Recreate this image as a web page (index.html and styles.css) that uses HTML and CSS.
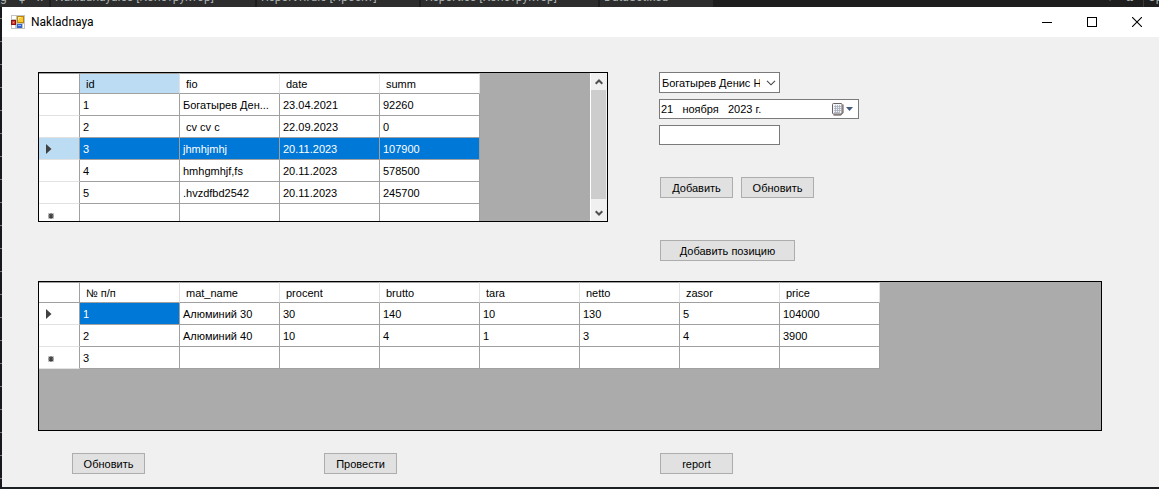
FILE: index.html
```html
<!DOCTYPE html>
<html lang="ru">
<head>
<meta charset="utf-8">
<title>Nakladnaya</title>
<link rel="stylesheet" href="styles.css">
</head>
<body>
<div class="ide-tabs">
  <span class="ide-icons"><span>g</span><span>џ</span><span>x</span></span>
  <span class="ide-tab tab-wide">Nakladnaya.cs [Конструктор]</span>
  <span class="ide-tab tab-mid">Report1.rdlc [Проект]</span>
  <span class="ide-tab tab-report">Report.cs [Конструктор]</span>
  <span class="ide-tab tab-short">DataSet.xsd</span>
  <span class="ide-tools"><span>▾</span><span>✿</span></span>
  <span class="ide-side">Ср</span>
</div>
<div class="desktop">
<div class="window">
  <header class="titlebar">
    <svg class="app-icon" width="14" height="14" viewBox="0 0 14 14" shape-rendering="crispEdges">
      <rect width="14" height="14" fill="#c3c3c3"/>
      <path d="M1 1h4v3H1zM1 10h3v3H1zM12 9h1v4h-1z" fill="#fff"/>
      <rect y="5" width="5" height="5" fill="#8c1410"/><rect x="1" y="6" width="3" height="3" fill="#d8402f"/><rect x="2" y="7" width="1" height="1" fill="#f3a090"/>
      <rect x="6" y="1" width="7" height="7" fill="#b8860b"/><rect x="7" y="2" width="5" height="5" fill="#fbc82e"/><path d="M7 2h3v1H8v2H7z" fill="#ffe99a"/>
      <rect x="6" y="9" width="5" height="4" fill="#3464cc"/><path d="M7 10h3v1H7z" fill="#8cb8ff"/>
    </svg>
    <h1 class="title">Nakladnaya</h1>
    <div class="window-buttons">
      <button class="window-button" type="button" aria-label="Свернуть"><svg width="10" height="10" viewBox="0 0 10 10"><path d="M0 5.5h10" stroke="#000"/></svg></button>
      <button class="window-button" type="button" aria-label="Развернуть"><svg width="10" height="10" viewBox="0 0 10 10"><rect x=".5" y=".5" width="9" height="9" fill="none" stroke="#000"/></svg></button>
      <button class="window-button" type="button" aria-label="Закрыть"><svg width="10" height="10" viewBox="0 0 10 10"><path d="M0 0l10 10M10 0L0 10" stroke="#000" stroke-width="1.1"/></svg></button>
    </div>
  </header>
  <main class="form">
    <section class="columns">
      <div class="data-grid">
        <div class="grid-view">
        <table class="table">
          <thead>
            <tr><th class="mark"></th><th class="current">id</th><th>fio</th><th>date</th><th>summ</th></tr>
          </thead>
          <tbody>
            <tr><th class="mark"></th><td>1</td><td>Богатырев Ден...</td><td>23.04.2021</td><td>92260</td></tr>
            <tr><th class="mark"></th><td>2</td><td>&nbsp;cv cv c</td><td>22.09.2023</td><td>0</td></tr>
            <tr class="selected"><th class="mark"><svg class="arrow" width="6" height="10" viewBox="0 0 6 10"><path d="M0 0l5.5 5L0 10z" fill="#404040"/></svg></th><td>3</td><td>jhmhjmhj</td><td>20.11.2023</td><td>107900</td></tr>
            <tr><th class="mark"></th><td>4</td><td>hmhgmhjf,fs</td><td>20.11.2023</td><td>578500</td></tr>
            <tr><th class="mark"></th><td>5</td><td>.hvzdfbd2542</td><td>20.11.2023</td><td>245700</td></tr>
            <tr><th class="mark"><svg class="star" width="6" height="6" viewBox="0 0 6 6"><path d="M3 0v6M0 3h6M.6.6l4.8 4.8M5.4.6L.6 5.4" stroke="#404040" stroke-width="1.2"/></svg></th><td></td><td></td><td></td><td></td></tr>
          </tbody>
        </table>
        </div>
        <div class="scrollbar">
          <button class="scroll-button" type="button" aria-label="Вверх"><svg width="8" height="6" viewBox="0 0 8 6"><path d="M.7 4.8L4 1.500l3.300 3.300" fill="none" stroke="#505050" stroke-width="2"/></svg></button>
          <div class="scroll-thumb"></div>
          <button class="scroll-button" type="button" aria-label="Вниз"><svg width="8" height="6" viewBox="0 0 8 6"><path d="M.7 1.2L4 4.500l3.300-3.300" fill="none" stroke="#505050" stroke-width="2"/></svg></button>
        </div>
      </div>
      <div class="fields">
        <div class="combo">
          <select class="field" aria-label="fio"><option>Богатырев Денис Николаевич</option></select>
          <svg class="chevron" width="10" height="6" viewBox="0 0 10 6"><path d="M1 .8l4 4 4-4" fill="none" stroke="#444" stroke-width="1.1"/></svg>
        </div>
        <div class="date-picker">
          <input class="date-text" type="text" aria-label="date" value="21   ноября   2023 г.">
          <button class="date-button" type="button" aria-label="Календарь">
            <svg width="22" height="13" viewBox="0 0 22 13">
              <path d="M1.500 12h7l2.500-2.500v-8" fill="none" stroke="#8a8080" stroke-width="1.400"/>
              <rect x=".5" y=".5" width="9.500" height="10.500" rx="1" fill="#f4f4f8" stroke="#6b6262"/>
              <path d="M2 3.500h7M2 5.500h7M2 7.500h7M2 9.500h5M3.500 2v8M5.500 2v8M7.500 2v8" stroke="#a5adbd" stroke-width=".8"/>
              <path d="M14 4h7l-3.500 4z" fill="#43597f"/>
            </svg>
          </button>
        </div>
        <input class="field" type="text" aria-label="summ">
        <div class="button-row">
          <button class="button" type="button">Добавить</button>
          <button class="button" type="button">Обновить</button>
        </div>
        <button class="button wide" type="button">Добавить позицию</button>
      </div>
    </section>
    <section class="data-grid items">
      <div class="grid-view">
      <table class="table">
        <thead>
          <tr><th class="mark"></th><th>№ п/п</th><th>mat_name</th><th>procent</th><th>brutto</th><th>tara</th><th>netto</th><th>zasor</th><th>price</th></tr>
        </thead>
        <tbody>
          <tr><th class="mark"><svg class="arrow" width="6" height="10" viewBox="0 0 6 10"><path d="M0 0l5.500 5L0 10z" fill="#404040"/></svg></th><td class="active">1</td><td>Алюминий 30</td><td>30</td><td>140</td><td>10</td><td>130</td><td>5</td><td>104000</td></tr>
          <tr><th class="mark"></th><td>2</td><td>Алюминий 40</td><td>10</td><td>4</td><td>1</td><td>3</td><td>4</td><td>3900</td></tr>
          <tr><th class="mark"><svg class="star" width="6" height="6" viewBox="0 0 6 6"><path d="M3 0v6M0 3h6M.6.6l4.8 4.8M5.4.6L.6 5.4" stroke="#404040" stroke-width="1.2"/></svg></th><td>3</td><td></td><td></td><td></td><td></td><td></td><td></td><td></td></tr>
        </tbody>
      </table>
      </div>
    </section>
    <section class="columns actions">
      <div class="action-pair">
        <button class="button" type="button">Обновить</button>
        <button class="button" type="button">Провести</button>
      </div>
      <div class="action-single"><button class="button" type="button">report</button></div>
    </section>
  </main>
</div>
</div>
</body>
</html>
```

FILE: styles.css
```css
* { box-sizing: border-box; }

body {
  margin: 0;
  min-height: 100vh;
  display: flex;
  flex-direction: column;
  background: #1c1f24;
  color: #000;
  font: 11px/14px "Liberation Sans", Arial, sans-serif;
}

button, input, select { font: inherit; color: inherit; border-radius: 0; margin: 0; }

/* Editor strip behind the window */
.ide-tabs {
  display: flex;
  align-items: flex-end;
  height: 7px;
  overflow: hidden;
  background: #1e1e1e;
  color: #a9b0b0;
  font: 12px/20px Roboto, sans-serif;
  white-space: nowrap;
}
.ide-icons { display: flex; justify-content: space-between; width: 49px; padding-right: 6px; background: #2d2d2d; }
.ide-tab { padding-left: 4px; border-left: 2px solid #1e1e1e; background: #2d2d2d; }
.tab-wide { width: 206px; }
.tab-mid { width: 164px; }
.tab-report { width: 179px; }
.tab-short { width: 115px; }
.ide-tools { display: flex; gap: 12px; margin-left: auto; padding-right: 8px; }
.ide-side { width: 16px; padding-left: 4px; border-left: 1px solid #3a3a3a; }

.desktop {
  flex: 1;
  display: flex;
  padding: 0 0 2px 2px;
  background: repeating-linear-gradient(#17191c 0 11px, #777 11px 12px, #17191c 12px 23px);
}
.window { flex: 1; min-width: 0; display: flex; flex-direction: column; background: #f0f0f0; box-shadow: 0 2px #1c1f24; }

.titlebar { display: flex; align-items: center; height: 30px; padding-left: 9px; background: #fff; }
.app-icon { flex: none; }
.title { margin: 0 0 0 6px; font: 12px/16px Roboto, sans-serif; }
.window-buttons { display: flex; margin-left: auto; }
.window-button {
  display: flex;
  align-items: center;
  justify-content: center;
  width: 45px;
  height: 29px;
  padding: 0;
  border: 0;
  background: none;
}

.form { flex: 1; padding: 35px 57px 13px 36px; }
.columns { display: grid; grid-template-columns: minmax(0, 570fr) minmax(0, 443fr); column-gap: 51px; align-items: start; }

/* Data grids */
.data-grid { display: flex; height: 150px; border: 1px solid #000; background: #ababab; }
.grid-view { flex: 1; min-width: 0; overflow: hidden; }
.items { margin-top: 20px; }
.table { width: max-content; table-layout: fixed; border-collapse: separate; border-spacing: 0; }
.table th, .table td {
  width: 100px;
  min-width: 100px;
  height: 22px;
  padding: 0 0 0 3px;
  border: solid #a0a0a0;
  border-width: 0 1px 1px 0;
  background: #fff;
  font-weight: 400;
  text-align: left;
  white-space: nowrap;
}
.table thead th { height: 21px; padding-left: 6px; border-top-width: 1px; border-right-color: #e2e2e2; }
.table .mark { width: 41px; min-width: 41px; padding: 0 0 0 7px; border-bottom-color: #e2e2e2; }
.table thead .mark { border-color: #a0a0a0; }
.table thead .current, .table .selected .mark { background: #bbdcf3; }
.table .selected td, .table .active { background: #0078d7; color: #fff; }
.arrow { display: block; }
.star { display: block; margin: 2px 0 0 2px; }

.scrollbar { display: flex; flex-direction: column; width: 17px; border-left: 1px solid #fff; background: #f0f0f0; }
.scroll-button { display: flex; align-items: center; justify-content: center; width: 15px; height: 17px; padding: 0; border: 0; background: none; }
.scroll-thumb { flex: 1; width: 15px; margin-bottom: 5px; background: #cdcdcd; }

/* Entry fields */
.fields { display: flex; flex-direction: column; align-items: flex-start; gap: 6px; }
.field { width: 121px; height: 20px; padding: 0 2px; border: 1px solid #7a7a7a; background: #fff; }
.combo { position: relative; display: flex; }
.combo .field { height: 21px; padding: 0 19px 0 2px; appearance: none; }
.chevron { position: absolute; top: 8px; right: 4px; pointer-events: none; }
.date-picker { display: flex; width: 200px; height: 20px; border: 1px solid #7a7a7a; background: #fff; }
.date-text { flex: 1; min-width: 0; padding: 0 1px; border: 0; background: none; }
.date-button { display: flex; align-items: center; padding: 0 4px; border: 0; background: none; }

.button { width: 73px; height: 21px; padding: 0; border: 1px solid #adadad; background: #e1e1e1; white-space: nowrap; }
.button-row { display: flex; gap: 8px; margin: 26px 0 0 1px; }
.wide { width: 135px; margin: 36px 0 0 1px; }

.actions { margin-top: 22px; }
.action-pair { display: flex; gap: 179px; padding-left: 34px; }
.action-single { padding-left: 1px; }
```
